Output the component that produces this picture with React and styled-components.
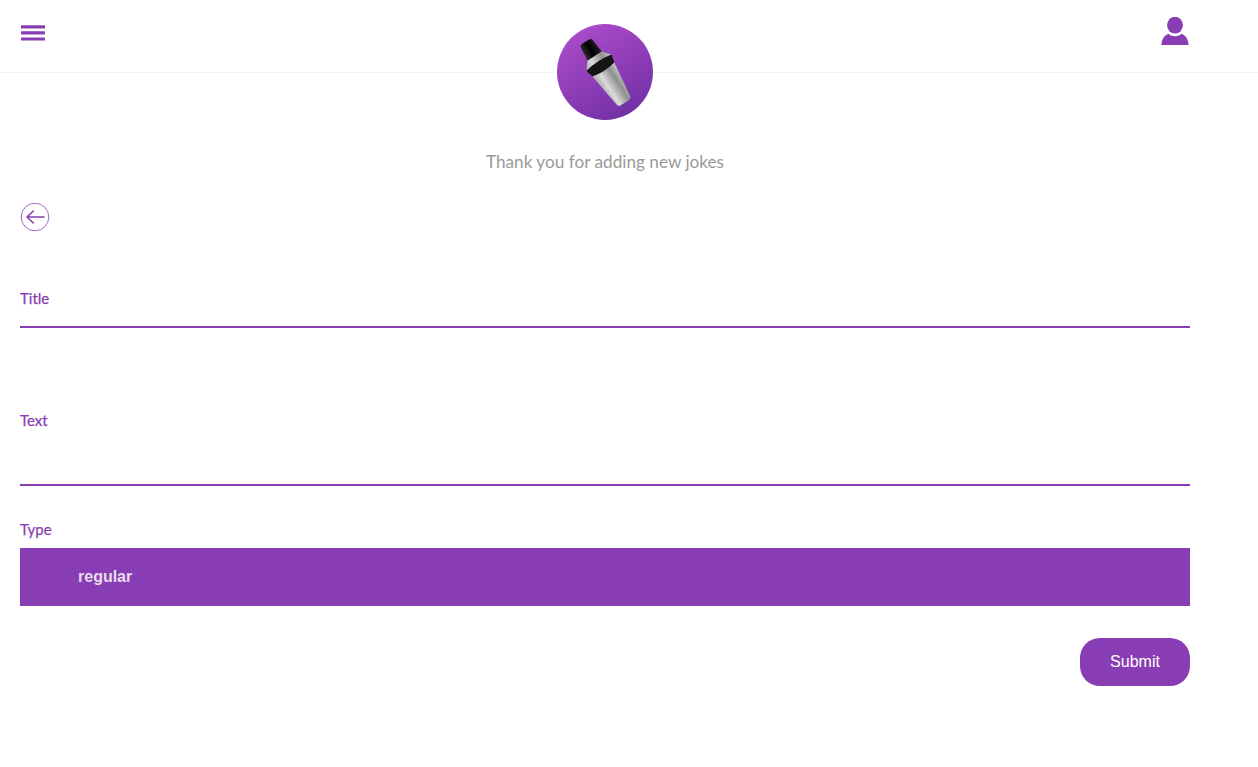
import React from "react";
import styled, { createGlobalStyle } from "styled-components";

const purple = "#893db4";

const GlobalStyle = createGlobalStyle`
  html, body {
    margin: 0;
    padding: 0;
    background: #fff;
    font-family: "Lato", "Liberation Sans", sans-serif;
  }
  * { box-sizing: border-box; }
`;

const Header = styled.header`
  position: relative;
  height: 73px;
  border-bottom: 1px solid #f2f2f2;
  padding: 17px 69px 0 20px;
  display: flex;
  justify-content: space-between;
  align-items: flex-start;
`;

const IconButton = styled.button`
  border: none;
  background: none;
  padding: 0;
  display: block;
  cursor: pointer;
  line-height: 0;
  margin-top: ${(props) => props.top || 0}px;
`;

const LogoBadge = styled.div`
  position: absolute;
  left: 557px;
  top: 24px;
  width: 96px;
  height: 96px;
  border-radius: 50%;
  overflow: hidden;
  background: linear-gradient(150deg, #b04fcf 0%, #8f3db8 50%, #6a2ca0 100%);
`;

const Main = styled.main`
  width: 1170px;
  margin-left: 20px;
`;

const Thanks = styled.p`
  margin: 0;
  padding-top: 79px;
  height: 130px;
  line-height: 20px;
  text-align: center;
  font-size: 17.2px;
  color: #9a9a9a;
`;

const BackLink = styled.a`
  display: block;
  width: 30px;
  height: 30px;
  line-height: 0;
`;

const Form = styled.form`
  display: flex;
  flex-direction: column;
`;

const Field = styled.div`
  display: flex;
  flex-direction: column;
  margin-top: ${(props) => props.top}px;
`;

const Label = styled.label`
  font-size: 15px;
  line-height: 18px;
  color: ${purple};
  -webkit-text-stroke: 0.25px ${purple};
`;

const TextInput = styled.input`
  border: none;
  border-bottom: 2px solid ${purple};
  outline: none;
  background: transparent;
  height: ${(props) => props.h}px;
  font: inherit;
`;

const SelectBar = styled.div`
  height: 58px;
  margin-top: 10px;
  padding-left: 58px;
  display: flex;
  align-items: center;
  background: ${purple};
  color: #e6dcec;
  font-family: "Liberation Sans", Arial, sans-serif;
  font-size: 16px;
  font-weight: 700;
`;

const Actions = styled.div`
  display: flex;
  justify-content: flex-end;
  margin-top: 32px;
`;

const Submit = styled.button`
  width: 110px;
  height: 48px;
  border: none;
  border-radius: 20px;
  background: ${purple};
  color: #fff;
  font-family: "Liberation Sans", Arial, sans-serif;
  font-size: 16px;
  cursor: pointer;
`;

const MenuIcon = () => (
  <svg width="25" height="18" viewBox="0 0 25 18">
    <g fill={purple}>
      <rect x="1" y="1.2" width="24" height="3.2" rx="0.5" />
      <rect x="1" y="7.3" width="24" height="3.2" rx="0.5" />
      <rect x="1" y="13.4" width="24" height="3.2" rx="0.5" />
    </g>
  </svg>
);

const UserIcon = () => (
  <svg width="28" height="28" viewBox="0 0 28 28">
    <ellipse cx="14" cy="8.2" rx="7.9" ry="8.4" fill={purple} />
    <path
      d="M0.4 28 C0.8 22.5 3 18.5 7.5 16.8 C9.5 18.6 11.7 19.2 14 19.2 C16.3 19.2 18.5 18.6 20.5 16.8 C25 18.5 27.2 22.5 27.6 28 Z"
      fill={purple}
    />
  </svg>
);

const BackIcon = () => (
  <svg width="30" height="30" viewBox="0 0 30 30" fill="none">
    <circle cx="15" cy="14" r="13.8" stroke="#a565c9" strokeWidth="1" />
    <path
      d="M24 14 H7 M13.3 8 L7 14 L13.3 20"
      stroke={purple}
      strokeWidth="1.6"
      strokeLinecap="round"
      strokeLinejoin="round"
    />
  </svg>
);

const ShakerLogo = () => (
  <svg width="96" height="96" viewBox="0 0 96 96">
    <defs>
      <linearGradient id="steel" x1="0" y1="0" x2="1" y2="0">
        <stop offset="0" stopColor="#aaaaaa" />
        <stop offset="0.3" stopColor="#dadada" />
        <stop offset="0.7" stopColor="#8f8f8f" />
        <stop offset="1" stopColor="#c6c6c6" />
      </linearGradient>
      <linearGradient id="cap" x1="0" y1="0" x2="1" y2="0">
        <stop offset="0" stopColor="#333" />
        <stop offset="0.5" stopColor="#000" />
        <stop offset="1" stopColor="#222" />
      </linearGradient>
    </defs>
    <g transform="rotate(-33 48 48)">
      <path d="M41 14.5 Q41.3 12 44 12 H52 Q54.7 12 55 14.5 L56.5 29 H39.5 Z" fill="url(#cap)" />
      <path d="M39.5 29 H56.5 L63 37 Q48 34 33 37 Z" fill="url(#steel)" />
      <path d="M33 37 Q48 34 63 37 L61 45 Q48 48 35 45 Z" fill="#141414" />
      <path
        d="M35 45 Q48 48 61 45 L56 82 Q55.6 84.5 53 84.5 H43 Q40.4 84.5 40 82 Z"
        fill="url(#steel)"
      />
    </g>
  </svg>
);

export default function App() {
  return (
    <>
      <GlobalStyle />
      <Header>
        <IconButton top={7} aria-label="menu">
          <MenuIcon />
        </IconButton>
        <LogoBadge>
          <ShakerLogo />
        </LogoBadge>
        <IconButton aria-label="account">
          <UserIcon />
        </IconButton>
      </Header>
      <Main>
        <Thanks>Thank you for adding new jokes</Thanks>
        <BackLink href="#" aria-label="back">
          <BackIcon />
        </BackLink>
        <Form onSubmit={(e) => e.preventDefault()}>
          <Field top={56}>
            <Label>Title</Label>
            <TextInput h={21} />
          </Field>
          <Field top={83}>
            <Label>Text</Label>
            <TextInput h={57} />
          </Field>
          <Field top={34}>
            <Label>Type</Label>
            <SelectBar>regular</SelectBar>
          </Field>
          <Actions>
            <Submit type="submit">Submit</Submit>
          </Actions>
        </Form>
      </Main>
    </>
  );
}
